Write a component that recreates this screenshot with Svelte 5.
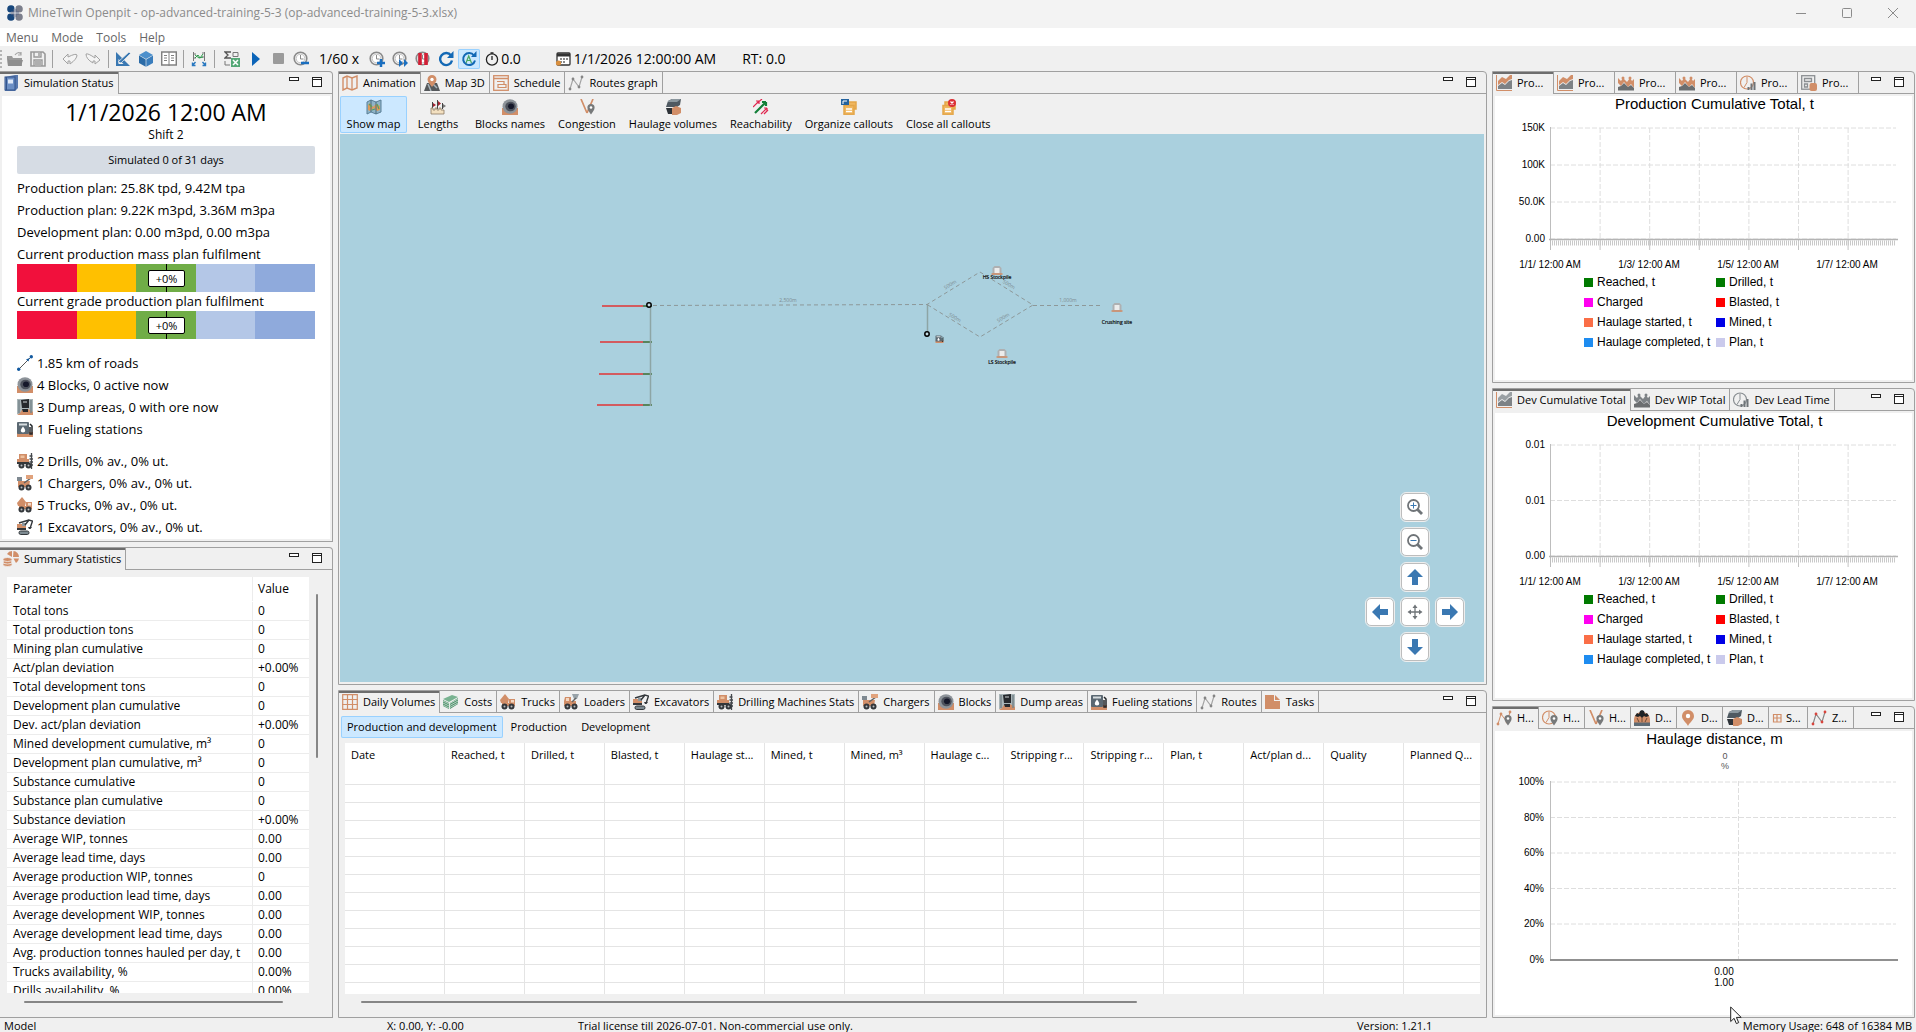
<script>
  const O = '#d18e68';
  const G = '#6f7478';
  const B = '#3a78b2';

  const clock = '<circle cx="7.5" cy="7.5" r="6.3" fill="none" stroke="#8a8a8a" stroke-width="1.6"/><circle cx="7.5" cy="7.5" r="4.3" fill="#fff" stroke="#c4c4c4"/><path d="M7.5 4v4h3" fill="none" stroke="#8a8a8a"/>';
  const pin = '<path d="M12 5a3.6 3.6 0 0 0-3.6 3.6C8.400 11 10 12.500 12 15.500c2-3 3.600-4.500 3.600-6.900A3.600 3.600 0 0 0 12 5z" fill="#77797a"/><circle cx="12" cy="8.500" r="1.300" fill="#fff"/>';
  const nodes = (line, dot) =>
    `<path d="M2 14L5 4l6 8 3-10" fill="none" stroke="${line}" stroke-width="1.200"/><g fill="${dot}"><circle cx="2" cy="14" r="1.400"/><circle cx="5" cy="4" r="1.400"/><circle cx="11" cy="12" r="1.400"/><circle cx="14" cy="2" r="1.400"/></g>`;
  const area = (axis, top, low) =>
    `<path d="M0.500 0v15.500H16" fill="none" stroke="${axis}"/><path d="M2 6l4-4 4 2 4-4h2v4l-3 1-4 4-3-2-4 3z" fill="${top}"/><path d="M2 11l4-3 3 2 4-4 3-1v9H2z" fill="${low}"/>`;
  const peaks = (top, low) =>
    `<path d="M0 3l3 3 2-3 4 4 3-4 2 3 2-2v9l-3-4-3 3-4-5-3 4-3-3z" fill="${top}"/><circle cx="5" cy="3" r="1.500" fill="${top}"/><circle cx="12" cy="3" r="1.500" fill="${top}"/><path d="M0 15.500V12l3-1 3-3 4 4 3-2 3 3v2.500z" fill="${low}"/>`;
  const leadTime = (c) =>
    `<circle cx="7" cy="7.500" r="6.500" fill="none" stroke="${c}" stroke-width="1.200"/><path d="M7 1.500v6l-3 5" fill="none" stroke="${c}"/><path d="M8.500 15v-3M11.500 15V8.500M14.500 15V7" stroke="#6f7478" stroke-width="2"/>`;
  const wheels = '<g fill="#33373b"><circle cx="4.500" cy="12.500" r="3"/><circle cx="11.500" cy="12.500" r="3"/></g><g fill="#b9bcbf"><circle cx="4.500" cy="12.500" r="1"/><circle cx="11.500" cy="12.500" r="1"/></g>';
  const folded = (inner) => `<path d="M1 3l4-2 5 2 5-2v12l-5 2-5-2-4 2z" ${inner}/>`;
  const sheet = (extra) => `<g fill="none" stroke="#e3a64a" stroke-width="1.500"><rect x="5" y="3" width="10" height="7" fill="#f0b75f"/><rect x="3" y="6.500" width="10" height="8.700" fill="#f0b75f"/></g><path d="M5 10h6M5 12.500h6" stroke="#fff" stroke-width="1.300"/>${extra}`;

  const icons = {
    logo: '<g fill="#7c7f8c"><circle cx="12" cy="4" r="3.800"/><circle cx="12" cy="12" r="3.800"/></g><g fill="#17467c"><circle cx="4" cy="4" r="3.800"/><circle cx="4" cy="12" r="3.800"/></g><path d="M4 8h8M8 4v8" stroke="#5b6784" stroke-width="3"/><path d="M8 0v16M0 8h16" stroke="#f3f3f3" stroke-width=".8"/>',
    open: '<path d="M0 5h5l1 2h9v8H1z" fill="#9a9a9a"/><path d="M0 5l2 4h14l-2 6H1z" fill="#8e8e8e"/><path d="M8 4q3-4 6-1m0-2v3h-3" fill="none" stroke="#a5a5a5" stroke-width="1.200"/>',
    save: '<path d="M1 1h12l2 2v12H1z" fill="none" stroke="#999" stroke-width="1.600"/><path d="M4 1v5h7V1M4 15V9h8v6M5 11h6M5 13h6M9 2v3" fill="none" stroke="#999" stroke-width="1.400"/>',
    undo: '<path d="M1 8l5-5v3q8-4 9-2q0 4-7 9v-3H6v3z" fill="#f4f4f4" stroke="#a2a2a2"/>',
    redo: '<path d="M15 9l-5-5v3Q3 2 1 3q0 5 7 9v-2h2v3z" fill="#f4f4f4" stroke="#a2a2a2"/>',
    design: `<path d="M1 1v14h14z" fill="${B}"/><path d="M3.500 8v5h5z" fill="#f0f0f0"/><path d="M3 11L14 1l1.500 1.500L6 12z" fill="${B}" stroke="#f0f0f0" stroke-width=".7"/>`,
    cube: '<path d="M8 0l7 4-7 4-7-4z" fill="#4d90cc"/><path d="M1 4.600l6.700 3.800v7.400L1 12z" fill="#2b6ba7"/><path d="M15 4.600L8.300 8.400v7.400L15 12z" fill="#3a7dbc"/>',
    book: '<rect x=".7" y="1" width="14.600" height="13" fill="#fff" stroke="#808080" stroke-width="1.500"/><path d="M8 1v14M3 4.500h3M3 7h3M3 9.500h3M10 4.500h3M10 7h3M10 9.500h3" stroke="#808080"/>',
    nodes: '<path d="M2.500 1v9M13.500 1v9" stroke="#777"/><path d="M3 3h2M3 7h2M11 2h2M11 6h2" stroke="#777"/><path d="M4 7l3-3 2 3 3-4M4 4l4 3 4-1" fill="none" stroke="#2c9a4b"/><path d="M4.500 11l-3 3.500m0-3v3h3M11.500 11l3 3.500m0-3v3h-3" fill="none" stroke="#2878c0" stroke-width="1.400"/>',
    excel: '<path d="M7 1H1l3 3-3 3h6" fill="none" stroke="#555" stroke-width="1.300"/><path d="M9 1.500h5v4H9zM1 10v4h5" fill="none" stroke="#777"/><path d="M7 7h9v9H7z" fill="#54a876"/><path d="M9 9l5 5M14 9l-5 5" stroke="#fff" stroke-width="1.500"/>',
    play: '<path d="M5 1l8 7-8 7z" fill="#0c64b8"/>',
    stop: '<rect x="3" y="2" width="11" height="11" rx="1" fill="#9b9b9b"/>',
    slower: clock + '<path d="M8 12h8" stroke="#1a6fc0" stroke-width="2.500"/>',
    faster: clock + '<path d="M8 12h8M12 8v8" stroke="#1a6fc0" stroke-width="2.500"/>',
    skip: clock + '<path d="M7 8l4 4-4 4zM12 8l4 4-4 4z" fill="#1a6fc0"/>',
    pause: clock + '<path d="M5 2v12M11 2v12" stroke="#d21f35" stroke-width="3.600"/>',
    refresh: '<path d="M13 4.500A6 6 0 1 0 14 9.500" fill="none" stroke="#1469b5" stroke-width="2.400"/><path d="M15.500 0v7H9z" fill="#1469b5"/>',
    refreshA: '<path d="M13 4.500A6 6 0 1 0 14 9.500" fill="none" stroke="#1469b5" stroke-width="2"/><path d="M15.500 0v6H10z" fill="#1469b5"/><path d="M5 12l2.700-7L10.500 12M6 9.500h4" fill="none" stroke="#4aa860" stroke-width="1.200"/>',
    timer: '<circle cx="8" cy="8.500" r="5.600" fill="none" stroke="#222" stroke-width="1.300"/><path d="M8 9V5M6.500 2h3" stroke="#222" stroke-width="1.300"/>',
    calendar: '<rect x="2" y="2" width="13" height="12" rx="1" fill="#fff" stroke="#333" stroke-width="1.300"/><path d="M2 4h13" stroke="#333" stroke-width="3"/><path d="M5 8h2M8 8h2M11 8h2M5 11h2M8 11h2" stroke="#666" stroke-width="1.500"/><circle cx="3.500" cy="12" r="2.600" fill="#d98f3f"/>',
    notebook: '<path d="M2 2l10-2h3v13l-3 3H2z" fill="#5879ae"/><rect x="2" y="2" width="10" height="13" fill="#6c8fc4" stroke="#33548c"/><rect x="5" y="4.500" width="5" height="4" fill="#dfe9f7"/><path d="M3.500 2v13" stroke="#33548c"/>',
    pie: `<g fill="${O}"><path d="M9 6V0a6 6 0 0 0-5 3z"/><path d="M10 6h6a6 6 0 0 0-5.500-6z"/><path d="M10.500 7.500H16a7 7 0 0 1-3 4.500z"/></g><g fill="${O}" stroke="#f0f0f0" stroke-width=".8"><ellipse cx="4.500" cy="13.500" rx="4.500" ry="2"/><ellipse cx="4.500" cy="11" rx="4.500" ry="2"/><ellipse cx="4.500" cy="8.500" rx="4.500" ry="2"/></g>`,
    map: folded(`fill="none" stroke="${O}" stroke-width="1.400"`) + `<path d="M5 1v12M10 3v12" stroke="${O}" stroke-width="1.300"/>`,
    showMap: folded('fill="#8fb4c8" stroke="#5a7f96"') + '<path d="M2 6l2-2 3 4 3-3 4 2v4l-3 1-3-3-4 3-2-1z" fill="#dd9a5a"/><path d="M5 1v12M10 3v12" stroke="#476a7f"/><path d="M3 5l3 3M11 5l2 5M6 11l3-1" stroke="#55a05f" stroke-width="1.200"/>',
    map3d: `<path d="M3 8h10l3 8H0z" fill="#55585b"/><path d="M4 9l3 7M9 9l4 4" stroke="#a8b4bb" stroke-width="1.500"/><path d="M8 0a4.500 4.500 0 0 0-4.500 4.500C3.500 7.500 6 9 8 12c2-3 4.500-4.500 4.500-7.500A4.500 4.500 0 0 0 8 0z" fill="${O}"/><circle cx="8" cy="4.500" r="1.700" fill="#fff"/>`,
    schedule: `<rect x=".7" y=".7" width="14.600" height="14.600" fill="none" stroke="${O}" stroke-width="1.300"/><path d="M1 3.500h14" stroke="${O}" stroke-width="1.500"/><path d="M4 6.500h7v2.500M5 9.500h8v3H5z" fill="none" stroke="${O}" stroke-width="1.200"/>`,
    routes: nodes('#a5a5a5', '#858585'),
    zone: nodes('#888', '#d8443c'),
    lengths: '<path d="M2.500 3v6M7.500 1v9M12.500 4v6" stroke="#444"/><path d="M3 4l3 2-3 2zM8 2l3 2.500L8 7z" fill="#a32331"/><path d="M13 5l3 2-3 2z" fill="#777"/><path d="M1 15V9h2v2h2V9h2v2h2V9h2v2h3v4z" fill="#f3e0c0" stroke="#8a7a62" stroke-width=".8"/>',
    block: `<path d="M0 9h16v7H0z" fill="${O}"/><ellipse cx="8" cy="7.500" rx="7.500" ry="7.300" fill="#8d9399"/><ellipse cx="8.500" cy="7.500" rx="5.200" ry="4.800" fill="#4d525c"/><ellipse cx="9" cy="7.300" rx="3" ry="2.800" fill="#15182a"/>`,
    congestion: `<path d="M2 0l6 14M14 0L8 14" stroke="${O}" stroke-width="1.700"/>` + pin,
    haulage: `<path d="M3 2l4-2h9l-1 6-3 2H1z" fill="#4f5961"/><path d="M3 2l4-2h9l-4 3H3z" fill="#8b979e"/><path d="M1 9h6v6H3z" fill="#2e3338"/><path d="M7 9l4-2 5 2v5l-4 2H7z" fill="${O}"/>`,
    reach: '<path d="M2 14L13 3M13 3H9M13 3v4" stroke="#14803a" stroke-width="2.200" fill="none"/><path d="M0 8l6-6M6 2H3M6 2v3M8 15l6-6M14 9h-3M14 9v3M3 5L9 0M11 15l4-4" stroke="#e0264f" fill="none" stroke-width="1.200"/>',
    organize: sheet('<path d="M0 0h8v6H0z" fill="#24639f"/><path d="M2 5V2h4" stroke="#fff" fill="none"/>'),
    close: sheet('<circle cx="12" cy="4" r="4" fill="#dc2f35"/><path d="M10.500 2.500l3 3M13.500 2.500l-3 3" stroke="#fff" stroke-width="1.200"/>'),
    road: '<path d="M3 13L13 3" stroke="#555"/><path d="M12.500 3L9 4.500l2.500 2z" fill="#12599f"/><circle cx="1.700" cy="14.200" r="1.700" fill="#12599f"/><circle cx="14.300" cy="1.700" r="1.700" fill="#12599f"/>',
    dump: `<rect width="16" height="15" fill="#a9b5b8"/><path d="M0 16h16v-3l-5-3-6 1-2 3z" fill="${O}"/><path d="M4 1l8-1v9H5zM5 10h6v3H6z" fill="#26292d"/><path d="M2 1v13M14 1v13" stroke="#77858a" stroke-width="1.500"/><path d="M6 3h4" stroke="#cfd6d8"/>`,
    fuel: `<path d="M0 11h16v5H0z" fill="${O}"/><rect x="0" y="1" width="12" height="12" rx="1" fill="#5b6872"/><rect x="2" y="2.500" width="8" height="2" fill="#d7dde0"/><path d="M6 5.500q-4.500 5.500 0 6q4.500-.5 0-6z" fill="#fff"/><path d="M13 3l2 2v8h-2V6" fill="none" stroke="#22262a" stroke-width="1.500"/>`,
    drill: `<path d="M2 1h8v5h2v5H0V6h2z" fill="${O}"/><path d="M3.500 2.500h4V5h-4z" fill="#eec29f"/><path d="M14.500 0v16M12.500 3h3M12.500 6h3.500M12.500 9h3.500M12.500 12h3.500" stroke="#44484c" stroke-width="1.300"/><path d="M0 9h12v2H0z" fill="#33373b"/>` + wheels,
    charger: `<path d="M1 6h12l-1 6H1z" fill="${O}"/><path d="M0 2h5v4H0z" fill="#7f8991"/><path d="M7 8l7-5" stroke="#5c6063" stroke-width="1.500"/><path d="M9 0h7v4H9z" fill="#e0a27c"/>` + wheels,
    truck: `<path d="M0 6l5-6 4 5-1 4H1z" fill="${O}"/><path d="M9 5h6v7H2V9h7z" fill="${O}"/><path d="M11 6h3v2.500h-3z" fill="#f3d7c2"/>` + wheels,
    loader: `<path d="M2 3h6v4h5v5H1V7z" fill="${O}"/><path d="M3 4h3v3H3z" fill="#f3d7c2"/><path d="M9 0h7l-2 5h-3z" fill="#98a2a8"/><path d="M9 8l4-4" stroke="#666" stroke-width="1.500"/>` + wheels,
    excavator: `<path d="M0 5h9v6H0z" fill="${O}"/><path d="M5 4h4v3H5z" fill="#8e989e"/><path d="M8 6l4-5 3.500 1-2 6M2 4L12 1" fill="none" stroke="#33373b" stroke-width="1.400"/><path d="M11 8h4l-1.500 2H12zM0 9h9v2H0z" fill="#33373b"/><rect x="2" y="12" width="10" height="3.500" rx="1.700" fill="#7d8a91" stroke="#33373b"/>`,
    grid: `<path d="M.7.7h14.600v14.600H.7zM5.500 0v16M10.500 0v16M0 5.500h16M0 10.500h16" fill="none" stroke="${O}" stroke-width="1.200"/>`,
    costs: '<path d="M0 5l9-4 6 2-9 5z" fill="#79b391"/><path d="M0 6l6 3v6l-6-3zM7 9l8-5v6l-8 5z" fill="#4f8f6c"/><path d="M0 9l6 3 9-5M0 7l6 3 9-5M0 11l6 3 9-5" stroke="#cfe4d7" fill="none" stroke-width=".8"/>',
    tasks: `<path d="M0 1h9v6h6v8H0z" fill="${O}"/><path d="M10 1l5 5h-5z" fill="${O}"/>`,
    areaO: area(O, O, '#7d8286'),
    areaG: area(O, '#9aa0a4', '#7d8286'),
    peaksO: peaks(O, '#6b6e70'),
    peaksG: peaks('#7d8286', '#6b6e70'),
    leadO: leadTime(O),
    leadG: leadTime('#8a8f93'),
    store: `<rect x=".7" y=".7" width="13" height="13.500" fill="none" stroke="#8b8f92" stroke-width="1.300"/><path d="M3.500 3.500h7v3h-7zM3.500 9h3v3h-3z" fill="none" stroke="#8b8f92" stroke-width="1.300"/><rect x="8.500" y="8" width="7.500" height="8" rx="2" fill="${O}"/>`,
    distPin: nodes(O, O).replace('stroke-width="1.200"', 'stroke-width="1"') + pin,
    timePin: leadTime(O).replace(/<path d="M8\.500 15.*$/, '') + pin,
    crusher: `<path d="M0 13V9a8 7 0 0 1 16 0v4z" fill="${O}"/><path d="M1 6l2-3 2 1 1-3 2-1 2 1 1 3 2-1 2 3-3 1-2-1-2 2-2-2-2 1z" fill="#1f2225"/><path d="M5 12L3 8M8 12V7M11 12l2-4" stroke="#6d4a36"/><path d="M0 12.500h16V16H0z" fill="#5e6b75"/>`,
    pin: `<path d="M8 0a6 6 0 0 0-6 6c0 4 4 6 6 10 2-4 6-6 6-10a6 6 0 0 0-6-6z" fill="${O}"/><circle cx="8" cy="6" r="2.200" fill="#fff"/>`,
    small: `<path d="M4.500 4.500h7.500v7.500H4.500zM8 4.500v7.500M4.500 8H12" fill="none" stroke="${O}" stroke-width="1.200"/>`,
    zoomIn: `<circle cx="6.500" cy="6.500" r="5.500" fill="none" stroke="${G}" stroke-width="1.800"/><path d="M10.500 10.500l4.500 4.500" stroke="${G}" stroke-width="2.800"/><path d="M3.500 6.500h6M6.500 3.500v6" stroke="${B}"/>`,
    zoomOut: `<circle cx="6.500" cy="6.500" r="5.500" fill="none" stroke="${G}" stroke-width="1.800"/><path d="M10.500 10.500l4.500 4.500" stroke="${G}" stroke-width="2.800"/><path d="M3.500 6.500h6" stroke="${B}"/>`,
    up: `<path d="M8 0l8 8h-5v8H5V8H0z" fill="${B}"/>`,
    down: `<path d="M8 16l8-8h-5V0H5v8H0z" fill="${B}"/>`,
    left: `<path d="M0 8l8-8v5h8v6H8v5z" fill="${B}"/>`,
    right: `<path d="M16 8L8 0v5H0v6h8v5z" fill="${B}"/>`,
    move: `<path d="M8 2v12M2 8h12" stroke="${G}" stroke-width="1.300"/><path d="M8 .5L10.500 4h-5zM8 15.500L5.500 12h5zM.5 8L4 5.500v5zM15.500 8L12 10.500v-5z" fill="${G}"/>`,
  };

  const tool = (icon, label) => ({ icon, label });
  const toolbar = [
    [tool('open', 'Open'), tool('save', 'Save')],
    [tool('undo', 'Undo'), tool('redo', 'Redo')],
    [tool('design', 'Design'), tool('cube', '3D model'), tool('book', 'Library')],
    [tool('nodes', 'Network')],
  ];
  const facts = [
    ['road', '1.85 km of roads'],
    ['block', '4 Blocks, 0 active now'],
    ['dump', '3 Dump areas, 0 with ore now'],
    ['fuel', '1 Fueling stations'],
  ];
  const fleet = [
    ['drill', '2 Drills, 0% av., 0% ut.'],
    ['charger', '1 Chargers, 0% av., 0% ut.'],
    ['truck', '5 Trucks, 0% av., 0% ut.'],
    ['excavator', '1 Excavators, 0% av., 0% ut.'],
  ];
  const plans = [
    'Production plan: 25.8K tpd, 9.42M tpa',
    'Production plan: 9.22K m3pd, 3.36M m3pa',
    'Development plan: 0.00 m3pd, 0.00 m3pa',
  ];
  const gauges = ['Current production mass plan fulfilment', 'Current grade production plan fulfilment'];
  const stats = [
    ['Total tons', '0'],
    ['Total production tons', '0'],
    ['Mining plan cumulative', '0'],
    ['Act/plan deviation', '+0.00%'],
    ['Total development tons', '0'],
    ['Development plan cumulative', '0'],
    ['Dev. act/plan deviation', '+0.00%'],
    ['Mined development cumulative, m³', '0'],
    ['Development plan cumulative, m³', '0'],
    ['Substance cumulative', '0'],
    ['Substance plan cumulative', '0'],
    ['Substance deviation', '+0.00%'],
    ['Average WIP, tonnes', '0.00'],
    ['Average lead time, days', '0.00'],
    ['Average production WIP, tonnes', '0'],
    ['Average production lead time, days', '0.00'],
    ['Average development WIP, tonnes', '0.00'],
    ['Average development lead time, days', '0.00'],
    ['Avg. production tonnes hauled per day, t', '0.00'],
    ['Trucks availability, %', '0.00%'],
    ['Drills availability, %', '0.00%'],
  ];
  const mapTools = [
    ['showMap', 'Show map'],
    ['lengths', 'Lengths'],
    ['block', 'Blocks names'],
    ['congestion', 'Congestion'],
    ['haulage', 'Haulage volumes'],
    ['reach', 'Reachability'],
    ['organize', 'Organize callouts'],
    ['close', 'Close all callouts'],
  ];
  const pad = [
    ['zoomIn', 'Zoom in', 'c2'],
    ['zoomOut', 'Zoom out', 'c2'],
    ['up', 'Pan up', 'c2'],
    ['left', 'Pan left', 'c1'],
    ['move', 'Fit to view', 'c2'],
    ['right', 'Pan right', 'c3'],
    ['down', 'Pan down', 'c2'],
  ];
  const columns = ['Date', 'Reached, t', 'Drilled, t', 'Blasted, t', 'Haulage st...', 'Mined, t', 'Mined, m³', 'Haulage c...', 'Stripping r...', 'Stripping r...', 'Plan, t', 'Act/plan d...', 'Quality', 'Planned Q...'];
  const legend = [
    ['#007a00', 'Reached, t'],
    ['#007a00', 'Drilled, t'],
    ['#ff00f0', 'Charged'],
    ['#ff0000', 'Blasted, t'],
    ['#fa6e47', 'Haulage started, t'],
    ['#0000e6', 'Mined, t'],
    ['#1e8cf0', 'Haulage completed, t'],
    ['#cacaec', 'Plan, t'],
  ];
  const tabs = {
    status: [['notebook', 'Simulation Status']],
    summary: [['pie', 'Summary Statistics']],
    center: [['map', 'Animation'], ['map3d', 'Map 3D'], ['schedule', 'Schedule'], ['routes', 'Routes graph']],
    volumes: [['grid', 'Daily Volumes'], ['costs', 'Costs'], ['truck', 'Trucks'], ['loader', 'Loaders'], ['excavator', 'Excavators'], ['drill', 'Drilling Machines Stats'], ['charger', 'Chargers'], ['block', 'Blocks'], ['dump', 'Dump areas'], ['fuel', 'Fueling stations'], ['routes', 'Routes'], ['tasks', 'Tasks']],
    production: [['areaO', 'Pro...'], ['areaO', 'Pro...'], ['peaksO', 'Pro...'], ['peaksO', 'Pro...'], ['leadO', 'Pro...'], ['store', 'Pro...']],
    development: [['areaG', 'Dev Cumulative Total'], ['peaksG', 'Dev WIP Total'], ['leadG', 'Dev Lead Time']],
    haulage: [['distPin', 'H...'], ['timePin', 'H...'], ['congestion', 'H...'], ['crusher', 'D...'], ['pin', 'D...'], ['haulage', 'D...'], ['small', 'S...'], ['zone', 'Z...']],
  };
  const pits = [
    { x: 263, y: 172 },
    { x: 261, y: 208 },
    { x: 260, y: 240 },
    { x: 258, y: 271 },
  ];
  const piles = [
    { x: 658, y: 137, label: 'HS Stockpile', ty: 145 },
    { x: 778, y: 174, label: 'Crushing site', ty: 190 },
    { x: 663, y: 220, label: 'LS Stockpile', ty: 230 },
  ];
  const distances = [
    { x: 449, y: 168, a: 0, t: '2,500m' },
    { x: 729, y: 168, a: 0, t: '1,000m' },
    { x: 612, y: 152, a: -31, t: '500m' },
    { x: 669, y: 152, a: 31, t: '500m' },
    { x: 615, y: 185, a: 31, t: '500m' },
    { x: 665, y: 185, a: -31, t: '500m' },
  ];
</script>

{#snippet icon(name)}
  <svg class="icon" viewBox="0 0 16 16" aria-hidden="true">{@html icons[name]}</svg>
{/snippet}

{#snippet tabBar(list, kind)}
  <header class="tabbar {kind}">
    <div class="tabs" role="tablist">
      {#each list as [ic, label], i}
        <button class="tab" class:active={i === 0} role="tab" aria-selected={i === 0}>
          {@render icon(ic)}<span>{label}</span>
        </button>
      {/each}
    </div>
    <div class="winbtns">
      <button class="min" aria-label="Minimize panel"></button>
      <button class="max" aria-label="Maximize panel"></button>
    </div>
  </header>
{/snippet}

{#snippet timeChart(title, yLabels)}
  <div class="chart">
    <h2>{title}</h2>
    <svg class="plot" viewBox="0 0 417 160" role="img" aria-label={title}>
      {#each yLabels as label, i}
        {@const y = 16 + (i * 111) / (yLabels.length - 1)}
        <path class="dash" d="M55 {y}H401" />
        <text class="axis-label" x="50" y={y + 3} text-anchor="end">{label}</text>
      {/each}
      {#each [1, 2, 3, 4, 5, 6] as i}
        <path class="dash v" d="M{55.5 + i * 49.6} 16V127" />
        <path class="tick" d="M{55.5 + i * 49.6} 127v11" />
      {/each}
      <path class="comb" d="M57 131H401" />
      <path class="axis" d="M55.500 15V138" />
      <path class="axis base" d="M54 127.500H403" />
      {#each ['1/1/ 12:00 AM', '1/3/ 12:00 AM', '1/5/ 12:00 AM', '1/7/ 12:00 AM'] as label, i}
        <text class="axis-label" x={55 + i * 99} y="156" text-anchor="middle">{label}</text>
      {/each}
    </svg>
    <ul class="legend">
      {#each legend as [color, label]}
        <li><svg viewBox="0 0 9 9" aria-hidden="true"><rect width="9" height="9" fill={color} /></svg>{label}</li>
      {/each}
    </ul>
  </div>
{/snippet}

<div class="app">
  <header class="title">
    {@render icon('logo')}
    <h1>MineTwin Openpit - op-advanced-training-5-3 (op-advanced-training-5-3.xlsx)</h1>
    <div class="sys">
      <button aria-label="Minimize"><svg viewBox="0 0 10 10"><path d="M0 5.500h10" /></svg></button>
      <button aria-label="Maximize"><svg viewBox="0 0 10 10"><rect x=".5" y=".5" width="9" height="9" rx="1" /></svg></button>
      <button aria-label="Close"><svg viewBox="0 0 10 10"><path d="M0 0l10 10M10 0L0 10" /></svg></button>
    </div>
  </header>
  <nav class="menu">
    {#each ['Menu', 'Mode', 'Tools', 'Help'] as item}<button>{item}</button>{/each}
  </nav>
  <div class="toolbar" role="toolbar" aria-label="Main toolbar">
    {#each toolbar as group}
      <div class="group">
        {#each group as t}<button aria-label={t.label}>{@render icon(t.icon)}</button>{/each}
      </div>
    {/each}
    <div class="group">
      <button aria-label="Export to Excel">{@render icon('excel')}</button>
      <button aria-label="Run">{@render icon('play')}</button>
      <button aria-label="Stop">{@render icon('stop')}</button>
      <button aria-label="Slower">{@render icon('slower')}</button>
      <span class="readout">1/60 x</span>
      <button aria-label="Faster">{@render icon('faster')}</button>
      <button aria-label="Maximum speed">{@render icon('skip')}</button>
      <button aria-label="Pause time">{@render icon('pause')}</button>
      <button aria-label="Refresh">{@render icon('refresh')}</button>
      <button class="on" aria-label="Auto refresh" aria-pressed="true">{@render icon('refreshA')}</button>
      <span class="meter">{@render icon('timer')}0.0</span>
      <span class="meter date">{@render icon('calendar')}1/1/2026 12:00:00 AM</span>
      <span class="meter">RT: 0.0</span>
    </div>
  </div>

  <main>
    <div class="col side">
      <section class="panel">
        {@render tabBar(tabs.status, '')}
        <div class="body status">
          <p class="now">1/1/2026 12:00 AM</p>
          <p class="shift">Shift 2</p>
          <div class="progress">Simulated 0 of 31 days</div>
          {#each plans as p}<p class="line">{p}</p>{/each}
          {#each gauges as g}
            <p class="caption">{g}</p>
            <div class="gauge">
              <i class="g1"></i><i class="g2"></i><i class="g3"></i><i class="g4"></i><i class="g5"></i>
              <b>+0%</b>
            </div>
          {/each}
          {#each [facts, fleet] as list}
            <ul class="facts">
              {#each list as [ic, text]}<li>{@render icon(ic)}{text}</li>{/each}
            </ul>
          {/each}
        </div>
      </section>
      <section class="panel">
        {@render tabBar(tabs.summary, '')}
        <div class="summary">
          <div class="tablebox">
            <table class="stats">
              <thead><tr><th>Parameter</th><th>Value</th></tr></thead>
              <tbody>
                {#each stats as [k, v]}<tr><td>{k}</td><td>{v}</td></tr>{/each}
              </tbody>
            </table>
          </div>
          <div class="vtrack"><div class="thumb"></div></div>
          <div class="htrack"><div class="thumb"></div></div>
        </div>
      </section>
    </div>

    <div class="col middle">
      <section class="panel">
        {@render tabBar(tabs.center, 'mid')}
        <div class="maptools">
          {#each mapTools as [ic, label], i}
            <button class:on={i === 0}>{@render icon(ic)}<span>{label}</span></button>
          {/each}
        </div>
        <div class="map">
          <svg class="scene" viewBox="1 0 1144 548" preserveAspectRatio="xMinYMin meet" role="img" aria-label="Mine road map">
            {#each pits as p}
              <path d="M{p.x} {p.y}H304" stroke="#e03434" stroke-width="1.500" />
              <path d="M304 {p.y}H313" stroke="#3b6b30" stroke-width="1.500" />
            {/each}
            <path d="M311.500 172V272" class="road" />
            <path d="M588.500 170V198" class="road" />
            <path class="route" d="M314 171.500L588 170.500L641 138L694 171L641 203L588 170.500M694 171.500H763" />
            <circle cx="310" cy="171" r="2.200" class="node" />
            <circle cx="588" cy="200" r="2.200" class="node" />
            <svg x="596" y="201" width="9" height="8" viewBox="0 0 16 16">{@html icons.fuel}</svg>
            {#each distances as d}
              <text class="dist" text-anchor="middle" transform="translate({d.x} {d.y}) rotate({d.a})">{d.t}</text>
            {/each}
            {#each piles as p}
              <g transform="translate({p.x - 5.5} {p.y - 5})">
                <path d="M1 9V2l2-2h5l2 2v7z" fill="#aeb0b2" /><rect x="3" y="2" width="5" height="5" fill="#ececec" /><path d="M0 8h11" stroke={O} stroke-width="1.500" />
              </g>
              <text class="pile" x={p.x} y={p.ty} text-anchor="middle">{p.label}</text>
            {/each}
          </svg>
          <div class="pad">
            {#each pad as [ic, label, c]}
              <button class={c} aria-label={label}>{@render icon(ic)}</button>
            {/each}
          </div>
        </div>
      </section>
      <section class="panel">
        {@render tabBar(tabs.volumes, 'vol')}
        <div class="subtabs">
          <button class="on">Production and development</button>
          <button>Production</button>
          <button>Development</button>
        </div>
        <div class="volbox">
          <table class="volumes">
            <thead><tr>{#each columns as c}<th>{c}</th>{/each}</tr></thead>
            <tbody>
              {#each Array(12) as _}<tr>{#each columns as _c}<td></td>{/each}</tr>{/each}
            </tbody>
          </table>
        </div>
        <div class="voltrack"><div class="thumb"></div></div>
      </section>
    </div>

    <div class="col charts">
      <section class="panel">
        {@render tabBar(tabs.production, 'even')}
        <div class="body">{@render timeChart('Production Cumulative Total, t', ['150K', '100K', '50.0K', '0.00'])}</div>
      </section>
      <section class="panel">
        {@render tabBar(tabs.development, 'dev')}
        <div class="body">{@render timeChart('Development Cumulative Total, t', ['0.01', '0.01', '0.00'])}</div>
      </section>
      <section class="panel">
        {@render tabBar(tabs.haulage, 'tight')}
        <div class="body">
          <div class="chart">
            <h2>Haulage distance, m</h2>
            <svg class="plot" viewBox="0 0 417 250" role="img" aria-label="Haulage distance, m">
              <text class="bar-label" x="230" y="12" text-anchor="middle">0</text>
              <text class="bar-label" x="230" y="22" text-anchor="middle">%</text>
              {#each ['100%', '80%', '60%', '40%', '20%', '0%'] as label, i}
                <path class="dash" d="M55 {35 + i * 35.5}H401" />
                <text class="axis-label" x="49" y={38 + i * 35.5} text-anchor="end">{label}</text>
              {/each}
              <path class="dash v" d="M243.500 34V212" />
              <path class="axis" d="M55.500 34V213" />
              <path class="axis dark" d="M55 213H403" />
              <text class="axis-label" x="229" y="228" text-anchor="middle">0.00</text>
              <text class="axis-label" x="229" y="239" text-anchor="middle">1.00</text>
            </svg>
          </div>
        </div>
      </section>
    </div>
  </main>

  <footer>
    <span>Model</span>
    <span>X: 0.00, Y: -0.00</span>
    <span>Trial license till 2026-07-01. Non-commercial use only.</span>
    <span>Version: 1.21.1</span>
    <span class="memory">Memory Usage: 648 of 16384 MB</span>
    <svg class="cursor" viewBox="0 0 12 19" aria-hidden="true"><path d="M.7 1v14.500l3.400-3.200 2.300 5.300 2.300-1-2.300-5.200h4.800z" fill="#fff" stroke="#222" /></svg>
  </footer>
</div>

<style>
  :global(body) { margin: 0; background: #f0f0f0; }
  .app {
    height: 100vh;
    display: flex;
    flex-direction: column;
    overflow: hidden;
    background: #f0f0f0;
    color: #000;
    font: 11px/16px 'Open Sans', 'Noto Sans', sans-serif;
  }
  button { font: inherit; color: inherit; background: none; border: 0; padding: 0; margin: 0; white-space: nowrap; }
  h1, h2, p, ul { margin: 0; padding: 0; font-weight: 400; list-style: none; }
  .icon { width: 16px; height: 16px; flex: none; display: block; }

  .title { height: 26px; padding: 0 0 2px 7px; flex: none; display: flex; align-items: center; gap: 5px; background: #f3f3f3; color: #8b8b8b; }
  .title h1 { font-size: 12px; flex: 1; }
  .sys { display: flex; }
  .sys button { width: 46px; height: 24px; display: grid; place-items: center; }
  .sys svg { width: 10px; height: 10px; fill: none; stroke: #8b8b8b; }
  .menu { height: 18px; flex: none; display: flex; gap: 13px; padding: 0 6px; background: #fff; color: #666; align-items: center; font-size: 12px; }
  .menu button { line-height: 18px; padding-top: 2px; }

  .toolbar { height: 25px; flex: none; display: flex; align-items: center; }
  .group { display: flex; align-items: center; gap: 7px; padding: 0 6px; height: 18px; border-left: 1px solid #a0a0a0; }
  .group:first-child { border-left: 2px dotted #b5b5b5; padding-left: 5px; }
  .group button { display: block; }
  .group:nth-child(2) { padding: 0 7px 0 9px; }
  .group:nth-child(4) { padding: 0 7px; }
  .group:last-child { padding-left: 9px; }
  .readout, .meter { font-size: 14px; line-height: 18px; white-space: nowrap; }
  .readout { padding: 0 3px; }
  .group button.on { padding: 2px 3px; margin: 0 -3px; }
  .on { background: #cce8ff; box-shadow: inset 0 0 0 1px #99d1ff; border-radius: 2px; }
  .meter { display: flex; align-items: center; gap: 1px; padding-right: 19px; }
  .date { padding-left: 8px; gap: 3px; }

  main { flex: 1; min-height: 0; display: grid; grid-template-columns: 333fr 1149fr 423fr; gap: 5px; padding-right: 1px; }
  .col { display: grid; gap: 5px; min-height: 0; min-width: 0; }
  .side { grid-template-rows: repeat(2, minmax(0, 1fr)); }
  .middle { grid-template-rows: minmax(0, 614fr) minmax(0, 328fr); }
  .charts { grid-template-rows: repeat(3, minmax(0, 1fr)); }
  .panel { display: flex; flex-direction: column; min-width: 0; min-height: 0; border: 1px solid #a0a0a0; border-radius: 0 4px 0 0; box-sizing: border-box; overflow: hidden; }
  .side .panel { border-left: 0; }

  .tabbar { display: flex; justify-content: space-between; height: 22px; flex: none; box-shadow: inset 0 -1px #a0a0a0; }
  .tabs { display: flex; min-width: 0; }
  .tab { display: flex; align-items: center; gap: 5px; padding: 0 4px 0 3px; border-right: 1px solid #a0a0a0; }
  .tab.active { background: #f0f0f0; box-shadow: inset 0 2px #6d6d6d; }
  .winbtns { display: flex; gap: 13px; padding: 5px 10px 0 0; }
  .winbtns button { width: 10px; border: 1px solid #222; height: 10px; background: #fff; }
  .winbtns .min { height: 4px; }
  .winbtns .max { box-shadow: inset 0 1px #fff, inset 0 2px #222; }
  .even .tab { width: 61px; box-sizing: border-box; }
  .tight .tab { width: 46px; box-sizing: border-box; }
  .tight .tab:nth-child(7) { width: 39px; padding-left: 0; gap: 1px; }
  .body { flex: 1; min-height: 0; margin: 2px; background: #fff; overflow: hidden; }

  .status { padding: 0 15px; font-size: 13px; }
  .now { font-size: 23px; line-height: 30px; padding-top: 1px; text-align: center; }
  .shift { line-height: 16px; text-align: center; font-size: 12px; margin-bottom: 3px; }
  .progress { height: 28px; line-height: 28px; background: #d6dce4; border-radius: 2px; text-align: center; font-size: 11px; margin-bottom: 3px; }
  .line { line-height: 22px; }
  .caption { line-height: 19px; }
  .line + .caption { padding-top: 1px; line-height: 20px; }
  .gauge { position: relative; display: grid; grid-template-columns: repeat(5, 1fr); height: 28px; }
  .gauge::before { content: ''; position: absolute; left: 50%; top: 0; bottom: 0; border-left: 1px solid #000; }
  .gauge b { position: absolute; left: 50%; top: 6px; width: 35px; margin-left: -18px; border: 1px solid #000; border-radius: 2px; background: #fff; font: 11px/15px 'Open Sans', sans-serif; text-align: center; }
  .g1 { background: #f1103c; } .g2 { background: #ffc000; } .g3 { background: #70ad47; } .g4 { background: #b4c7e7; } .g5 { background: #8faadc; }
  .facts { padding-top: 13px; }
  .facts + .facts { padding-top: 10px; }
  .facts li { display: flex; align-items: center; gap: 4px; height: 22px; }

  .summary { flex: 1; min-height: 0; display: grid; grid-template: minmax(0, 1fr) 24px / minmax(0, 1fr) 23px; padding: 7px 0 0 7px; }
  .tablebox { background: #fff; overflow: hidden; font-size: 12px; }
  table { border-collapse: collapse; table-layout: fixed; width: 100%; }
  th, td { font-weight: 400; text-align: left; padding: 0; white-space: nowrap; }
  .stats th, .stats td { padding-left: 6px; height: 18px; line-height: 18px; border-bottom: 1px solid #ececec; }
  .stats th { height: 24px; border-bottom-color: #fff; }
  .stats th:first-child { width: 239px; }
  .stats th + th, .stats td + td { border-left: 1px solid #ececec; padding-left: 5px; }
  .vtrack { padding: 17px 0 0 7px; }
  .thumb { background: #868686; border-radius: 1px; }
  .vtrack .thumb { width: 2px; height: 41%; }
  .htrack { padding: 8px 0 0 17px; }
  .htrack .thumb { height: 2px; width: 91%; }

  .maptools { display: flex; gap: 1px; padding: 2px 1px 0; height: 39px; box-sizing: border-box; flex: none; }
  .maptools button { display: flex; flex-direction: column; align-items: center; padding: 3px 6px 0; height: 37px; min-width: 60px; box-sizing: border-box; }
  .maptools button.on { min-width: 67px; }
  .maptools span { line-height: 18px; }
  .map { position: relative; flex: 1; min-height: 0; margin: 1px 2px 2px 1px; background: #aad0de; }
  .scene { display: block; width: 100%; height: 100%; fill: none; }
  .road { stroke: #8da5a5; stroke-width: 1.500; }
  .route { stroke: #8d9899; stroke-dasharray: 4 3; }
  .node { stroke: #000; stroke-width: 1.500; fill: #c5dde4; }
  .dist { font-size: 5px; fill: #7b8a90; }
  .pile { font-size: 5px; fill: #111; stroke: #111; stroke-width: .2; }
  .pad { position: absolute; right: 19px; bottom: 20px; display: grid; grid-template-columns: repeat(3, 30px); grid-auto-rows: 30px; gap: 5px; }
  .pad button { background: #fff; border: 1px solid #bdbdbd; border-radius: 5px; outline: 1px solid #eee; margin: 1px; display: grid; place-items: center; }
  .c1 { grid-column: 1; } .c2 { grid-column: 2; } .c3 { grid-column: 3; }

  .subtabs { display: flex; gap: 2px; padding: 3px 2px 0; flex: none; }
  .subtabs button { padding: 0 6px; height: 22px; }
  .volbox { flex: 1; min-height: 0; margin: 5px 6px 0; background: #fff; overflow: hidden; }
  .volumes { width: max(100%, 1139px); }
  .volumes th, .volumes td { border-right: 1px solid #e4e4e4; border-bottom: 1px solid #e4e4e4; height: 17px; }
  .volumes th { height: 35px; padding: 3px 0 3px 6px; line-height: 18px; vertical-align: top; }
  .volumes th:first-child { width: 93px; }
  .voltrack { height: 23px; flex: none; padding: 7px 0 0 22px; box-sizing: border-box; }
  .voltrack .thumb { height: 2px; width: 69%; }

  .chart { font: 12px/16px 'Liberation Sans', Arial, sans-serif; }
  .chart h2 { font-size: 15px; line-height: 16px; text-align: center; padding-left: 22px; }
  .plot { display: block; width: 100%; }
  .axis-label { font-size: 10px; fill: #000; }
  .bar-label { font-size: 9px; fill: #555; }
  .dash { stroke: #dedede; stroke-dasharray: 5 2; }
  .axis { stroke: #bdbdbd; fill: none; }
  .tick { stroke: #c4c4c4; }
  .base { stroke: #b4b4b4; stroke-width: 1.500; }
  .dark { stroke: #909090; stroke-width: 2; }
  .comb { stroke: #c9c9c9; stroke-width: 5; stroke-dasharray: 1 1; }
  .legend { display: grid; grid-template-columns: 132px 1fr; padding: 0 0 0 89px; }
  .legend li { display: flex; align-items: center; gap: 4px; height: 20px; white-space: nowrap; }
  .legend svg { width: 9px; height: 9px; flex: none; }

  footer { position: relative; height: 14px; flex: none; line-height: 16px; display: grid; grid-template-columns: 383fr 191fr 779fr 371fr 184fr; padding: 0 4px; white-space: nowrap; }
  .memory { text-align: right; }
  .cursor { position: absolute; left: 1730px; bottom: 7px; width: 12px; height: 19px; }
</style>
